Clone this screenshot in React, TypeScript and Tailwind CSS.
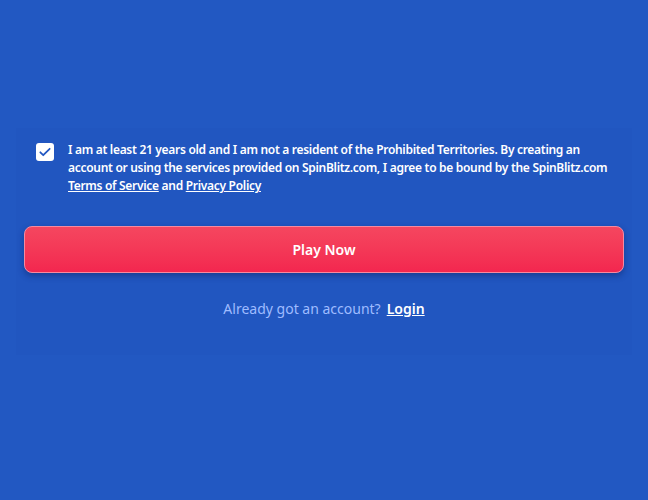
import React from "react";

const SignupFooter: React.FC = () => {
  return (
    <div
      className="min-h-[500px] w-full bg-[#2258c2] pt-[128px]"
      style={{ fontFamily: '"Noto Sans", "Open Sans", sans-serif' }}
    >
      <div className="mx-4 bg-[#2156c0] px-2 pb-[36px] pt-[13px]">
        <label className="flex items-start gap-[14px] pl-3">
          <span className="mt-[2px] flex h-[18px] w-[18px] shrink-0 items-center justify-center rounded-[3px] bg-white">
            <svg width="14" height="14" viewBox="0 0 24 24" fill="none">
              <path
                d="M4 12.5l5 5L20 6.5"
                stroke="#2257c2"
                strokeWidth="3"
                strokeLinecap="round"
                strokeLinejoin="round"
              />
            </svg>
          </span>
          <p className="text-[12px] font-semibold leading-[18px] tracking-[-0.3px] text-white">
            I am at least 21 years old and I am not a resident of the Prohibited
            Territories. By creating an
            <br />
            account or using the services provided on SpinBlitz.com, I agree to
            be bound by the SpinBlitz.com
            <br />
            <a className="underline">Terms of Service</a> and{" "}
            <a className="underline">Privacy Policy</a>
          </p>
        </label>

        <button className="mt-[31px] h-[47px] w-full rounded-lg border border-[#f58aa0] bg-gradient-to-b from-[#f5465f] to-[#f3264f] text-[14px] font-semibold text-white shadow-[0_3px_6px_rgba(10,30,90,0.45)]">
          Play Now
        </button>

        <div className="mt-[25px] flex items-center justify-center gap-[6px] text-[14px]">
          <span className="text-[#9fbcff]">Already got an account?</span>
          <a className="font-semibold text-white underline">Login</a>
        </div>
      </div>
    </div>
  );
};

export default function App() {
  return <SignupFooter />;
}
